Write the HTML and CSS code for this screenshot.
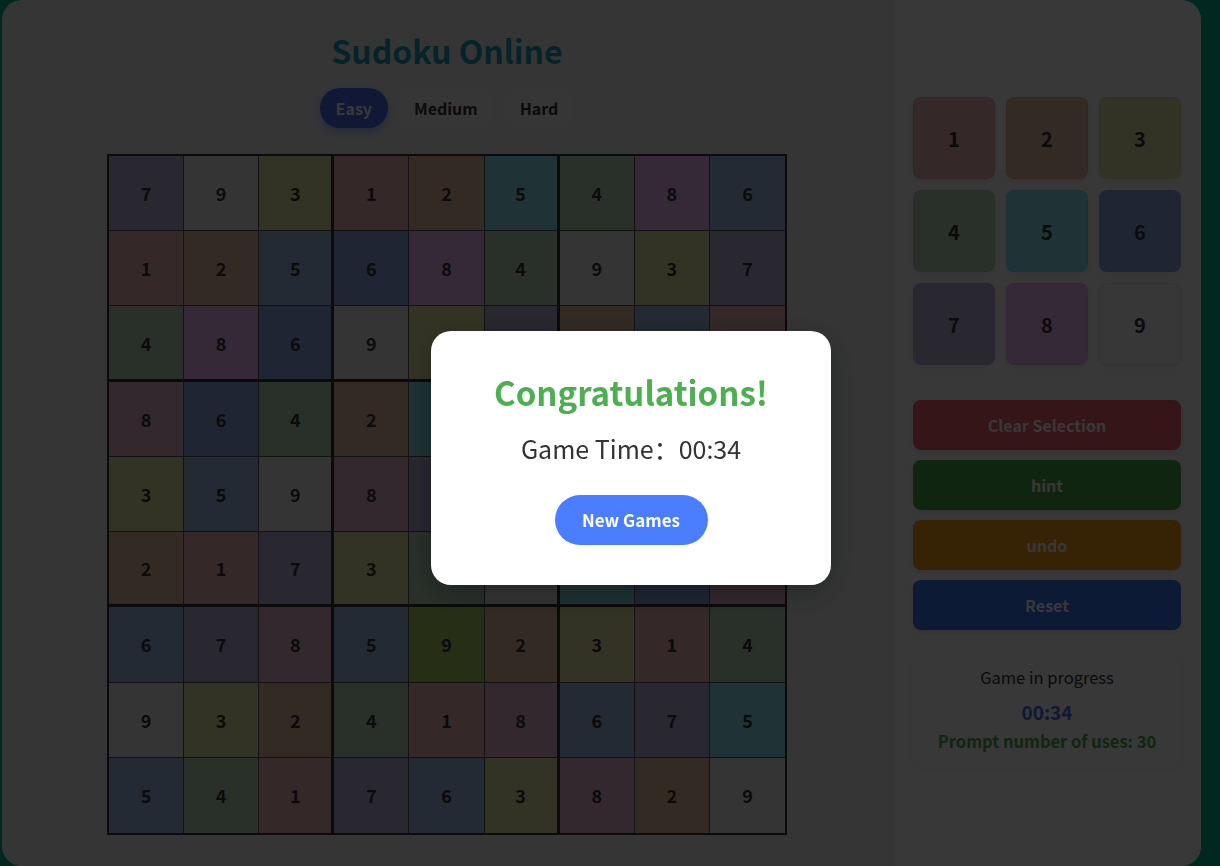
FILE: index.html
```html
<!DOCTYPE html>
<html lang="en">
<head>
  <meta charset="UTF-8" />
  <meta name="viewport" content="width=device-width, initial-scale=1.0"/>
  <title>Sudoku Online</title>
  <link rel="stylesheet" href="styles.css">
</head>
<body>
  <div class="app">
    <main class="board-area">
      <h1>Sudoku Online</h1>
      <div class="levels">
        <button class="active">Easy</button>
        <button>Medium</button>
        <button>Hard</button>
      </div>
      <div class="board" id="board"></div>
    </main>

    <aside class="side">
      <div class="numpad" id="numpad"></div>

      <div class="actions">
        <button class="btn-clear">Clear Selection</button>
        <button class="btn-hint">hint</button>
        <button class="btn-undo">undo</button>
        <button class="btn-reset">Reset</button>
      </div>

      <div class="status">
        <div class="status-text">Game in progress</div>
        <div class="timer">00:34</div>
        <div class="hints-left">Prompt number of uses: 30</div>
      </div>
    </aside>
  </div>

  <div class="overlay">
    <div class="modal">
      <h2>Congratulations!</h2>
      <p>Game Time：00:34</p>
      <button>New Games</button>
    </div>
  </div>

  <script>
    const solution = [
      '793125486',
      '125684937',
      '486937251',
      '864251793',
      '359876142',
      '217349568',
      '678592314',
      '932418675',
      '541763829'
    ];
    // a = filled by the player, h = last hint
    const marks = [
      '........a',
      '..a......',
      '.......a.',
      'a........',
      '.a.a.....',
      '........a',
      'a.aah....',
      '.....aa..',
      'a...a.a..'
    ];

    const board = document.getElementById('board');
    solution.forEach((row, r) => {
      [...row].forEach((n, c) => {
        const cell = document.createElement('div');
        const m = marks[r][c];
        cell.className = `cell d${n}${m === 'a' ? ' alt' : ''}${m === 'h' ? ' hl' : ''}`;
        cell.textContent = n;
        board.appendChild(cell);
      });
    });

    const numpad = document.getElementById('numpad');
    for (let n = 1; n <= 9; n++) {
      const key = document.createElement('button');
      key.className = `num d${n}`;
      key.textContent = n;
      numpad.appendChild(key);
    }
  </script>
</body>
</html>
```

FILE: styles.css
```css
body {
  margin: 0;
  background: #00b894;
  font-family: "Noto Sans CJK SC", "Noto Sans", sans-serif;
  color: #333;
}

button {
  font-family: inherit;
  cursor: pointer;
}

.app {
  display: flex;
  width: 1199px;
  height: 866px;
  margin-left: 2px;
  border-radius: 20px;
  overflow: hidden;
  background: #f0f2f5;
}

.board-area {
  flex: 1;
  display: flex;
  flex-direction: column;
  align-items: center;
  padding-top: 30px;
}

h1 {
  margin: 0;
  font-size: 32px;
  line-height: 40px;
  color: #17a5bb;
}

.levels {
  display: flex;
  gap: 10px;
  margin-top: 18px;
}

.levels button {
  height: 40px;
  padding: 0 16px;
  border: none;
  border-radius: 20px;
  background: #f6f6f6;
  color: #333;
  font-size: 16px;
  font-weight: bold;
}

.levels .active {
  background: #4a6cf7;
  color: #fff;
  box-shadow: 0 4px 10px rgba(74, 108, 247, 0.4);
}

.board {
  display: grid;
  grid-template-columns: repeat(9, 1fr);
  grid-template-rows: repeat(9, 1fr);
  width: 680px;
  height: 681px;
  margin-top: 26px;
  box-sizing: border-box;
  border: 2px solid #333;
}

.cell {
  display: flex;
  align-items: center;
  justify-content: center;
  border-right: 1px solid #555;
  border-bottom: 1px solid #555;
  font-size: 18px;
  font-weight: 600;
}

.cell:nth-child(9n+3),
.cell:nth-child(9n+6) {
  border-right: 3px solid #333;
}

.cell:nth-child(9n) {
  border-right: none;
}

.cell:nth-child(n+19):nth-child(-n+27),
.cell:nth-child(n+46):nth-child(-n+54) {
  border-bottom: 3px solid #333;
}

.cell:nth-child(n+73) {
  border-bottom: none;
}

/* digit colours */
.d1 { background: #ebb8b8; }
.d2 { background: #e8c09e; }
.d3 { background: #e8e8aa; }
.d4 { background: #bcdcc0; }
.d5 { background: #8ee4f0; }
.d6 { background: #90aaea; }
.d7 { background: #bcb0d8; }
.d8 { background: #f0b8fa; }
.d9 { background: #ececec; }

.d5.alt,
.d6.alt { background: #a2c0e6; }
.d8.alt { background: #e8b4cc; }
.d9.hl { background: #aed266; }

.side {
  width: 309px;
  box-sizing: border-box;
  padding: 97px 20px 0;
  background: #fff;
  border-left: 1px solid #eceef0;
}

.numpad {
  display: grid;
  grid-template-columns: repeat(3, 82px);
  gap: 11px;
}

.num {
  height: 82px;
  border: 1px solid rgba(0, 0, 0, 0.04);
  border-radius: 8px;
  color: #333;
  font-size: 20px;
  font-weight: 600;
  box-shadow: 0 2px 6px rgba(0, 0, 0, 0.08);
}

.num.d9 {
  background: #f8f8f8;
  border-color: #e6e6e6;
}

.actions {
  display: flex;
  flex-direction: column;
  gap: 10px;
  margin-top: 35px;
}

.actions button {
  height: 50px;
  border: none;
  border-radius: 8px;
  color: #fff;
  font-size: 16px;
  font-weight: bold;
  box-shadow: 0 2px 6px rgba(0, 0, 0, 0.1);
}

.btn-clear { background: #f0616d; }
.btn-hint { background: #48a84c; }
.btn-undo { background: #f39c12; }
.btn-reset { background: #3a75f0; }

.status {
  margin-top: 21px;
  padding: 13px 15px 15px;
  border-radius: 10px;
  background: #fcfcfc;
  box-shadow: 0 2px 8px rgba(0, 0, 0, 0.06);
  text-align: center;
}

.status-text {
  font-size: 16.5px;
  line-height: 26px;
}

.timer {
  margin-top: 8px;
  font-size: 19px;
  font-weight: bold;
  color: #4a6cf7;
}

.hints-left {
  margin-top: 4px;
  font-size: 16.5px;
  font-weight: bold;
  color: #4caf50;
}

.overlay {
  position: fixed;
  inset: 0;
  display: flex;
  align-items: center;
  justify-content: center;
  padding: 49px 0 0 42px;
  box-sizing: border-box;
  background: rgba(0, 0, 0, 0.78);
}

.modal {
  width: 400px;
  box-sizing: border-box;
  padding: 40px;
  border-radius: 20px;
  background: #fff;
  text-align: center;
  box-shadow: 0 8px 30px rgba(0, 0, 0, 0.3);
}

.modal h2 {
  margin: 0;
  font-size: 33px;
  line-height: 42px;
  color: #4caf50;
}

.modal p {
  margin: 20px 0 0;
  font-size: 25px;
  line-height: 30px;
  color: #333;
}

.modal button {
  width: 153px;
  height: 50px;
  margin-top: 32px;
  border: none;
  border-radius: 25px;
  background: #4a7dff;
  color: #fff;
  font-size: 17px;
  font-weight: bold;
}
```
